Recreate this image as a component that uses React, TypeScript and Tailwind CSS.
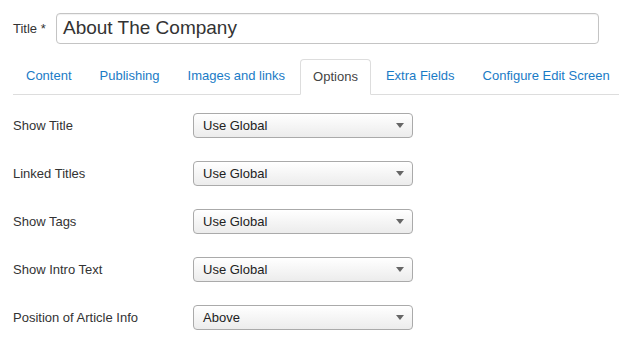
import React from 'react';

const tabs = ['Content', 'Publishing', 'Images and links', 'Options', 'Extra Fields', 'Configure Edit Screen'];

const rows = [
  { label: 'Show Title', value: 'Use Global' },
  { label: 'Linked Titles', value: 'Use Global' },
  { label: 'Show Tags', value: 'Use Global' },
  { label: 'Show Intro Text', value: 'Use Global' },
  { label: 'Position of Article Info', value: 'Above' },
];

const Select = ({ value }: { value: string }) => (
  <div className="flex items-center justify-between w-[220px] h-[25px] rounded-[4px] border border-[#aaaaaa] bg-gradient-to-b from-white to-[#ececec] pl-[9px] pr-[8px] shadow-[inset_0_1px_0_#fff]">
    <span className="text-[13px] text-[#222]">{value}</span>
    <span className="w-0 h-0 border-l-[4px] border-r-[4px] border-t-[5px] border-l-transparent border-r-transparent border-t-[#666]" />
  </div>
);

export default function App() {
  return (
    <div className="w-[619px] h-[339px] bg-white pl-[13px] pt-[13px] overflow-hidden font-['Liberation_Sans',Arial,sans-serif] text-[#333]">
      <div className="flex items-center">
        <label className="w-[43px] text-[13px]">Title *</label>
        <div className="w-[543px] h-[31px] rounded-[4px] border border-[#c4c4c4] flex items-center pl-[6px] shadow-[inset_0_1px_1px_rgba(0,0,0,0.06)]">
          <span className="text-[19px] text-[#333]">About The Company</span>
        </div>
      </div>

      <div className="flex mt-[15px] border-b border-[#dddddd] whitespace-nowrap">
        {tabs.map((t) =>
          t === 'Options' ? (
            <div
              key={t}
              className="shrink-0 px-[12px] h-[36px] leading-[34px] mr-[2px] -mb-px text-[13px] text-[#444] bg-white border border-[#dddddd] border-b-white rounded-t-[4px]"
            >
              {t}
            </div>
          ) : (
            <div key={t} className="shrink-0 px-[13px] h-[35px] leading-[34px] mr-[2px] text-[13px] text-[#1a7bc6]">
              {t}
            </div>
          )
        )}
      </div>

      <div className="flex flex-col gap-[23px] mt-[18px]">
        {rows.map((r) => (
          <div key={r.label} className="flex items-center">
            <div className="w-[180px] text-[13px] text-[#333]">{r.label}</div>
            <Select value={r.value} />
          </div>
        ))}
      </div>
    </div>
  );
}
